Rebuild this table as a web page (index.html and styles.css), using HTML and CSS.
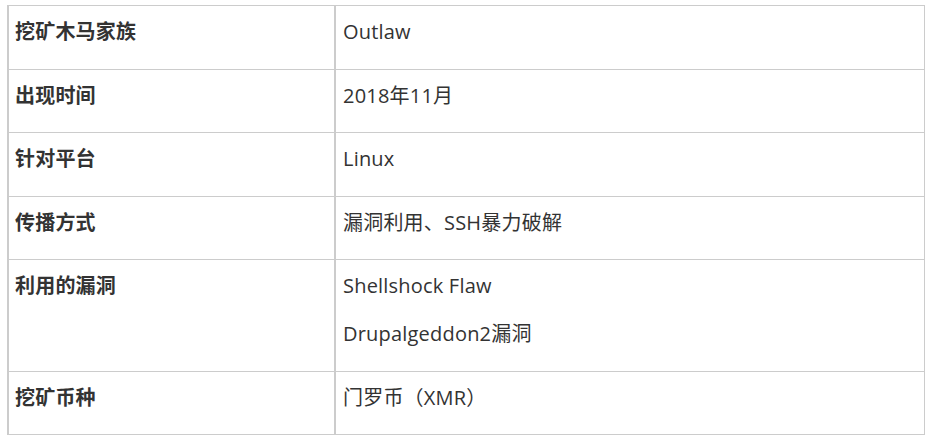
FILE: index.html
```html
<!DOCTYPE html>
<html lang="zh-CN">
<head>
<meta charset="utf-8">
<link rel="stylesheet" href="styles.css">
</head>
<body>
<table class="info">
  <tbody>
    <tr><td class="k"><p>挖矿木马家族</p></td><td class="v"><p>Outlaw</p></td></tr>
    <tr><td class="k"><p>出现时间</p></td><td class="v"><p>2018年11月</p></td></tr>
    <tr><td class="k"><p>针对平台</p></td><td class="v"><p>Linux</p></td></tr>
    <tr><td class="k"><p>传播方式</p></td><td class="v"><p>漏洞利用、SSH暴力破解</p></td></tr>
    <tr><td class="k"><p>利用的漏洞</p></td><td class="v"><p>Shellshock Flaw</p><p>Drupalgeddon2漏洞</p></td></tr>
    <tr><td class="k"><p>挖矿币种</p></td><td class="v"><p>门罗币（XMR）</p></td></tr>
  </tbody>
</table>
</body>
</html>
```

FILE: styles.css
```css
html, body {
  margin: 0;
  padding: 0;
  background: #fff;
}
body {
  padding: 5px 6px 0 7px;
  font-family: "Open Sans", "Noto Sans CJK SC", sans-serif;
  font-size: 20px;
  color: #333;
}
.info {
  width: 918px;
  border-collapse: collapse;
  table-layout: fixed;
}
.info td {
  border: 1px solid #ccc;
  vertical-align: top;
  padding: 10px 7px 4.5px 7px;
}
.info td.k {
  width: 312px;
  font-weight: bold;
  padding-left: 6px;
  border-left-width: 2px;
  border-right-width: 2px;
}
.info p {
  margin: 0 0 16px 0;
  line-height: 32px;
  letter-spacing: 0.2px;
}
```
